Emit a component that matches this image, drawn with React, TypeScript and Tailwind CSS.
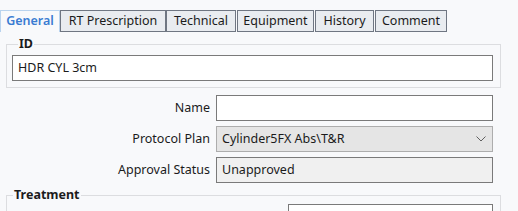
const tabs = [
  { label: "General", w: "w-[60px]", mr: "mr-0" },
  { label: "RT Prescription", w: "w-[106px]", mr: "mr-0" },
  { label: "Technical", w: "w-[70px]", mr: "mr-[1px]" },
  { label: "Equipment", w: "w-[77px]", mr: "mr-[1px]" },
  { label: "History", w: "w-[59px]", mr: "mr-[1px]" },
  { label: "Comment", w: "w-[72px]", mr: "mr-0" },
];

function Row({ label, children }: { label: string; children: React.ReactNode }) {
  return (
    <div className="flex h-[26px] items-center">
      <div className="w-[205px] pr-[1px] text-right">{label}</div>
      <div className="ml-[5px] w-[277px]">{children}</div>
    </div>
  );
}

export default function App() {
  return (
    <div
      className="h-[211px] w-[518px] overflow-hidden bg-[#f8f9fb] text-[12.5px] text-[#1b1b1b]"
      style={{ fontFamily: '"Noto Sans", "Open Sans", sans-serif' }}
    >
      <div className="flex pt-[10px]">
        {tabs.map((t, i) => (
          <div
            key={t.label}
            className={`${t.w} ${t.mr} flex h-[22px] items-center justify-center border ${
              i === 0
                ? "border-[#b9d3ee] border-b-0 bg-[#f8f9fb] font-semibold text-[#3b7cd2]"
                : "border-[#6f7682] bg-[#e9ecf0]"
            }`}
          >
            {t.label}
          </div>
        ))}
      </div>

      <div className="px-[6px]">
        <fieldset className="mt-[3px] w-[495px] border border-[#dcdde0] pb-[6px] pl-[5px]">
          <legend className="ml-[6px] px-[1px] leading-[18px] font-bold">ID</legend>
          <div className="mt-[2px] flex h-[26px] w-[481px] items-center border border-[#7a7a7a] bg-white px-[5px]">
            HDR CYL 3cm
          </div>
        </fieldset>

        <div className="mt-[7px] flex flex-col gap-[5px]">
          <Row label="Name">
            <div className="h-[26px] border border-[#7a7a7a] bg-white" />
          </Row>
          <Row label="Protocol Plan">
            <div className="flex h-[26px] items-center justify-between border border-[#adadad] bg-[#e5e5e5] px-[5px]">
              <span>Cylinder5FX Abs\T&amp;R</span>
              <svg width="10" height="6" viewBox="0 0 10 6" className="mr-[1px]">
                <path d="M0.5 0.5 L5 5 L9.5 0.5" fill="none" stroke="#606060" strokeWidth="1" />
              </svg>
            </div>
          </Row>
          <Row label="Approval Status">
            <div className="flex h-[26px] items-center border border-[#7a7a7a] bg-[#f0f0f0] px-[5px]">
              Unapproved
            </div>
          </Row>
        </div>

        <fieldset className="mt-[3px] w-[495px] border border-[#dcdde0]">
          <legend className="ml-[6px] px-[1px] leading-[18px] font-bold">Treatment</legend>
          <div className="ml-[281px] h-[26px] w-[205px] border border-[#7a7a7a] bg-white" />
        </fieldset>
      </div>
    </div>
  );
}
